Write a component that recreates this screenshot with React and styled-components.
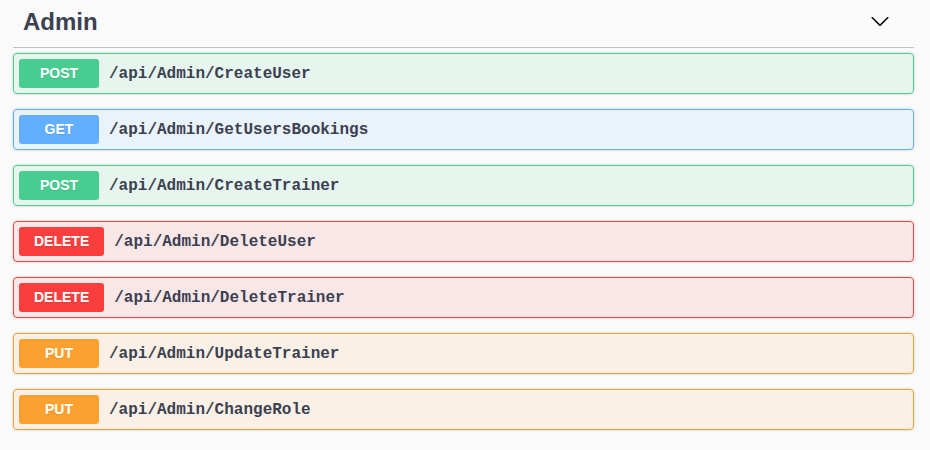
import React from "react";
import styled, { createGlobalStyle } from "styled-components";

const Global = createGlobalStyle`
  html, body { margin: 0; padding: 0; background: #fafafa; }
  body { font-family: "Liberation Sans", Arial, sans-serif; }
`;

const COLORS = {
  POST: { main: "#49cc90", bg: "rgba(73,204,144,.1)" },
  GET: { main: "#61affe", bg: "rgba(97,175,254,.1)" },
  DELETE: { main: "#f93e3e", bg: "rgba(249,62,62,.1)" },
  PUT: { main: "#fca130", bg: "rgba(252,161,48,.1)" },
};

const Page = styled.div`
  padding: 0 16px 0 13px;
`;

const TagHeader = styled.h3`
  display: flex;
  align-items: center;
  justify-content: space-between;
  margin: 0 0 5px;
  padding: 8px 24px 11px 10px;
  border-bottom: 1px solid rgba(59, 65, 81, 0.3);
  font-family: "Liberation Sans", Arial, sans-serif;
  font-size: 24px;
  line-height: 28px;
  font-weight: 700;
  color: #3b4151;
`;

const Arrow = styled.svg`
  width: 20px;
  height: 20px;
  fill: #000;
  display: block;
  margin-top: -2px;
`;

const Block = styled.div`
  display: flex;
  align-items: center;
  margin: 0 0 15px;
  padding: 5px;
  border: 1px solid ${(p) => COLORS[p.$method].main};
  background: ${(p) => COLORS[p.$method].bg};
  border-radius: 4px;
  box-shadow: 0 0 3px rgba(0, 0, 0, 0.19);
`;

const Method = styled.span`
  box-sizing: border-box;
  min-width: 80px;
  padding: 6px 15px;
  text-align: center;
  font-family: "Liberation Sans", Arial, sans-serif;
  font-size: 14px;
  line-height: 17px;
  font-weight: 700;
  color: #fff;
  background: ${(p) => COLORS[p.$method].main};
  border-radius: 3px;
  text-shadow: 0 1px 0 rgba(0, 0, 0, 0.1);
`;

const Path = styled.span`
  padding: 0 10px;
  font-family: "Liberation Mono", "Courier New", monospace;
  font-size: 16px;
  font-weight: 700;
  color: #3b4151;
`;

const ops = [
  ["POST", "/api/Admin/CreateUser"],
  ["GET", "/api/Admin/GetUsersBookings"],
  ["POST", "/api/Admin/CreateTrainer"],
  ["DELETE", "/api/Admin/DeleteUser"],
  ["DELETE", "/api/Admin/DeleteTrainer"],
  ["PUT", "/api/Admin/UpdateTrainer"],
  ["PUT", "/api/Admin/ChangeRole"],
];

export default function App() {
  return (
    <>
      <Global />
      <Page>
        <TagHeader>
          <span>Admin</span>
          <Arrow viewBox="0 0 20 20">
            <path d="M17.418 6.109c.272-.268.709-.268.979 0s.271.701 0 .969l-7.908 7.83c-.27.268-.707.268-.979 0l-7.908-7.83c-.27-.268-.27-.701 0-.969.271-.268.709-.268.979 0L10 13.25l7.418-7.141z" />
          </Arrow>
        </TagHeader>
        {ops.map(([m, p]) => (
          <Block key={p} $method={m}>
            <Method $method={m}>{m}</Method>
            <Path>{p}</Path>
          </Block>
        ))}
      </Page>
    </>
  );
}
